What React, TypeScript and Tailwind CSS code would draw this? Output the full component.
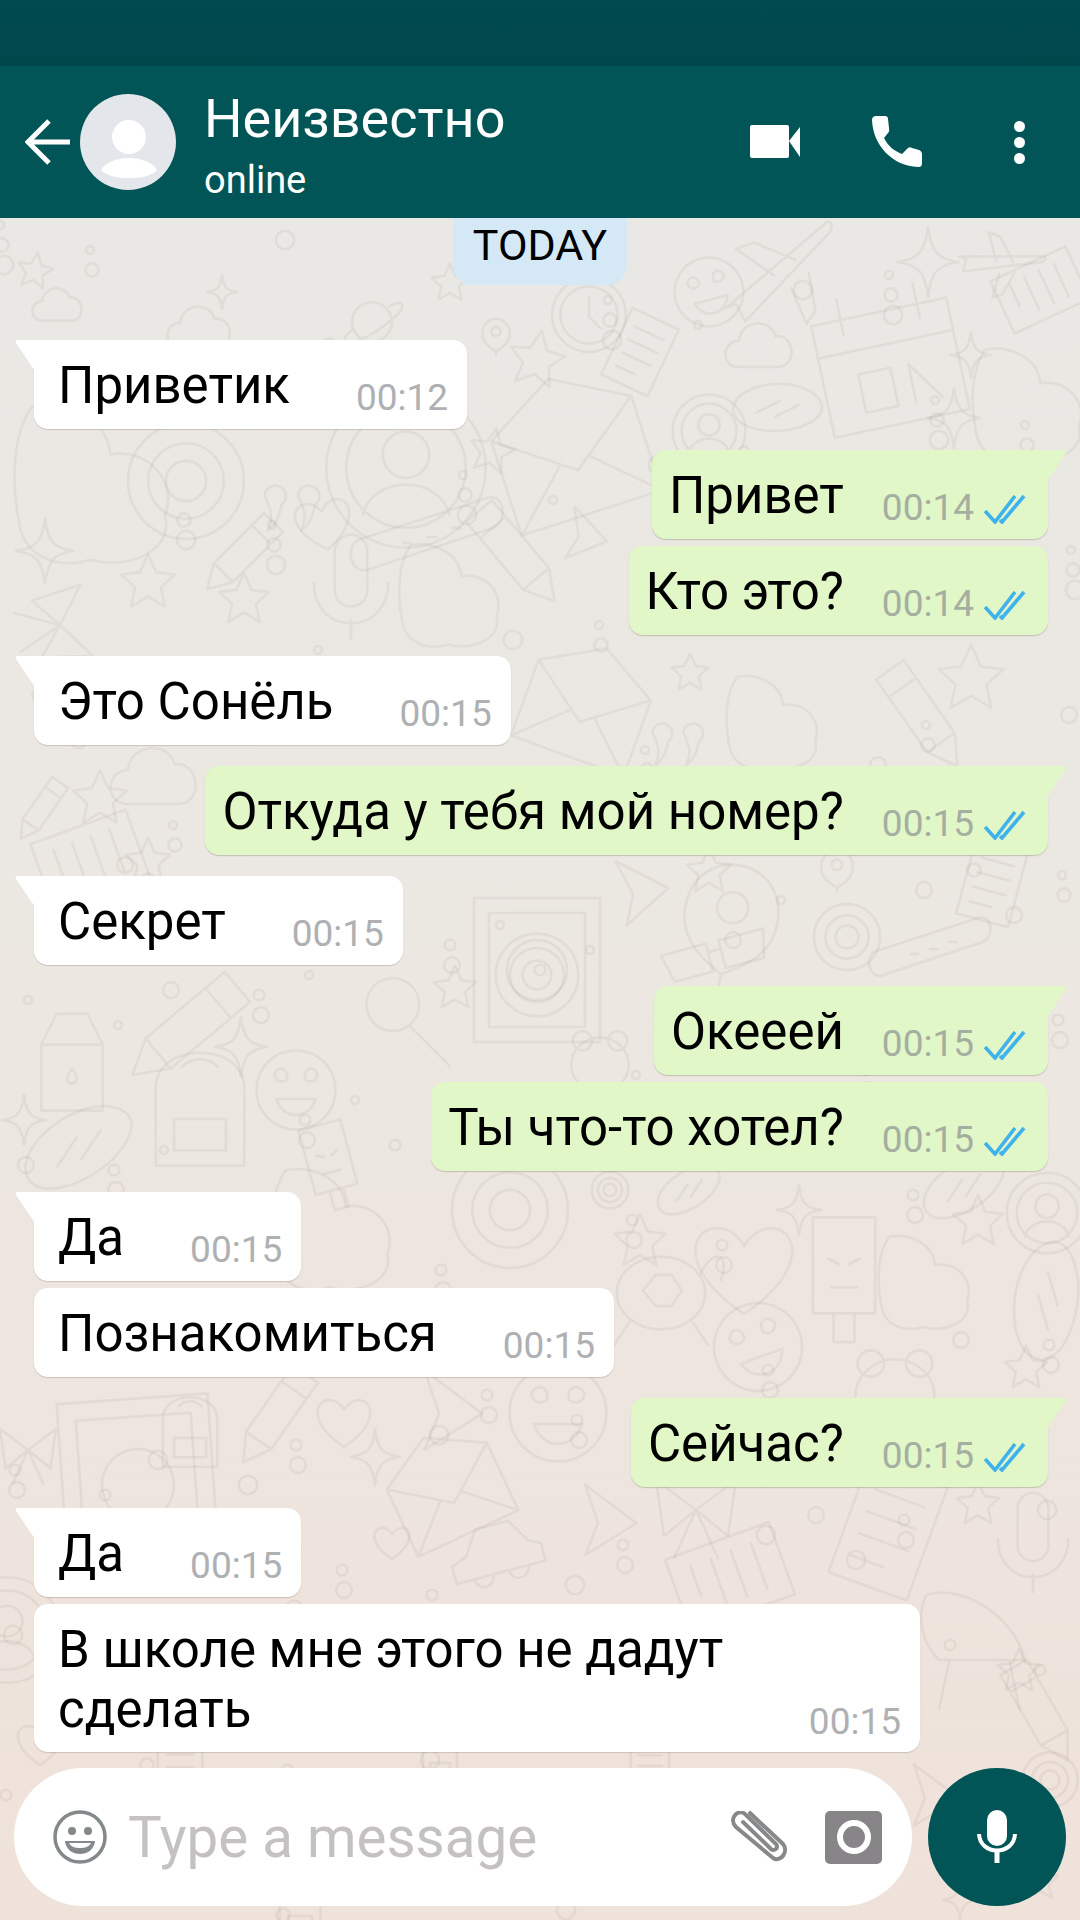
import type { ReactNode } from 'react';

// wallpaper doodles, each drawn in a box around 0,0 (about -50..50)
const star = 'M0-46 14-15 46-11 22 11 29 44 0 27-29 44-22 11-46-11-14-15Z';
const shapes: Record<string, string> = {
  star,
  sparkle: 'M0-50C4-14 14-4 44 0 14 4 4 14 0 50-4 14-14 4-44 0-14-4-4-14 0-50Z',
  heart: 'M0 40C-60 0-50-40-22-38-8-37 0-22 0-22 0-22 10-38 24-38 50-38 58 2 0 40Z',
  cloud: 'M-30 30C-56 30-56-6-30-8-28-36 14-42 22-14 50-18 54 30 26 30Z',
  ring: 'M-48 0A48 48 0 1 0 48 0A48 48 0 1 0-48 0ZM-36 0A36 36 0 1 0 36 0A36 36 0 1 0-36 0ZM-14-8A14 14 0 1 0 14-8A14 14 0 1 0-14-8ZM-26 28C-20 4 20 4 26 28',
  pencil: 'M-14-48 14-48 14 26 0 50-14 26ZM-14-30 14-30M-14 26 14 26',
  mic: 'M-14-26A14 14 0 0 1 14-26V8A14 14 0 0 1-14 8ZM-32 2C-32 48 32 48 32 2M0 34V50',
  envelope: 'M-46-22 0-48 46-22V40H-46ZM-46-22 0 12 46-22M-46 40-10 6M46 40 10 6',
  clock: 'M-44 0A44 44 0 1 0 44 0A44 44 0 1 0-44 0ZM-34 0A34 34 0 1 0 34 0A34 34 0 1 0-34 0ZM0-22V2L14 16',
  calendar: 'M-46-30H46V46H-46ZM-46-8H46M-26-44V-20M26-44V-20M-22 34V8H0V34ZM12 34V8L30 34',
  smile: 'M-44 0A44 44 0 1 0 44 0A44 44 0 1 0-44 0ZM-22 10C-14 34 14 34 22 10ZM-24-18C-18-28-8-24-10-12-18-6-24-12-24-18ZM24-18C18-28 8-24 10-12 18-6 24-12 24-18Z',
  plane: 'M-48 34 44-44C50-48 50-38 46-34L-30 46-38 30ZM-4 4-38-20-22-26 16-10M12 16 26 48 34 36 28 2',
  doc: 'M-32-46H32V46H-32ZM-20-26H20M-20-8H20M-20 10H20M-20 28H6',
  balloon: 'M-36-6C-36-58 36-58 36-6 36 22 10 34 0 40-10 34-36 22-36-6ZM-12-12A12 12 0 1 0 12-12A12 12 0 1 0-12-12ZM0 40V50',
  donut: 'M-46 0A46 46 0 1 0 46 0A46 46 0 1 0-46 0ZM-16 0A16 16 0 1 0 16 0A16 16 0 1 0-16 0ZM-30 0A30 30 0 1 0 30 0A30 30 0 1 0-30 0Z',
  glasses: 'M-48-14H-6V12H-42ZM6-14H48L42 12H6ZM-6-6H6',
  planet: 'M-30 0A30 30 0 1 0 30 0A30 30 0 1 0-30 0ZM-28 10C-50 28-44 36-20 28 0 20 30 0 44-18 50-30 40-32 26-24',
  blob: 'M-34-46C-14-50 10-40 12-18 34-22 52-2 44 18 50 40 20 50 0 44-20 50-40 42-42 20-46 0-46-30-34-46Z',
  turtle: 'M-34 0A34 28 0 1 0 34 0A34 28 0 1 0-34 0ZM-14-2-4-14H8L16-2 8 10H-4ZM30-14C40-36 54-30 46-10M-24 22-36 40M24 22 36 40',
  bear: 'M-36 6A36 34 0 1 0 36 6A36 34 0 1 0-36 6ZM-34-24A12 12 0 1 0-10-24A12 12 0 1 0-34-24ZM10-24A12 12 0 1 0 34-24A12 12 0 1 0 10-24Z',
  popsicle: 'M-24-46H24V28H-24ZM-8 28V50H8V28ZM-12-14-4-10M12-14 4-10M-10 8H10',
  bag: 'M-34-14C-34-50 34-50 34-14V46H-34ZM-20 10H20V34H-20ZM-14-30C-6-38 6-38 14-30',
  car: 'M-46 20V2L-30-4-14-28H20L34-4 46 2V20ZM-28 20A10 10 0 1 0-8 20M8 20A10 10 0 1 0 28 20',
  chair: 'M-40-40C-10-50 30-20 36 10H-30C-46-6-46-26-40-40ZM-22 10-30 48M24 10 32 48',
  tablet: 'M-42-48H42V48H-42ZM-32-38H32V38H-32ZM-20 0A20 20 0 1 0 20 0A20 20 0 1 0-20 0Z',
  triangle: 'M-26-44 38 4-26 44-10 4Z',
  belt: 'M-46 8 40-20C52-24 54-4 44 0L-40 28C-52 30-54 12-46 8ZM-16 10H-10M0 6H6M16 0H22',
  quotes: 'M-32-20A14 14 0 1 1-10-8C-12 8-20 20-28 26-20 10-24-4-32-20ZM12-20A14 14 0 1 1 34-8C32 8 24 20 16 26 24 10 20-4 12-20Z',
  bread: 'M-44 22C-50 0-10-36 24-34 54-30 44-8 32 6 12 30-38 48-44 22ZM-18 16-2-8M2 10 18-14',
  bow: 'M0 0-40-30-32 26ZM0 0 40-30 32 26ZM0 0-22 48M0 0 22 48',
  milk: 'M-28-14-14-42H14L28-14V46H-28ZM-28-14H28M0 8C-14 26 14 26 0 8Z',
  mag: 'M-36-14A24 24 0 1 0 12-14A24 24 0 1 0-36-14ZM4 6 40 42',
};

// [shape, x, y, size, rotation]
const doodles: [string, number, number, number, number][] = [
  ['star', 35, 270, 38, 10], ['sparkle', 222, 292, 34, 0], ['cloud', 58, 305, 52, 0], ['cloud', 200, 328, 66, 0], ['planet', 372, 322, 66, 0],
  ['clock', 589, 315, 84, 0], ['smile', 709, 292, 78, -15], ['plane', 778, 271, 110, 0], ['calendar', 888, 356, 150, -12], ['balloon', 496, 336, 38, 0],
  ['doc', 640, 352, 80, 25], ['star', 537, 358, 60, 10], ['envelope', 572, 452, 160, -18], ['ring', 406, 468, 166, 0], ['star', 492, 450, 48, 12],
  ['blob', 1026, 405, 120, 0], ['sparkle', 954, 418, 60, 0], ['sparkle', 971, 355, 46, 0], ['ring', 709, 431, 76, 0], ['doc', 1040, 290, 90, 65],
  ['plane', 1000, 260, 70, 40], ['cloud', 760, 346, 70, 0], ['bread', 778, 408, 90, 30], ['star', 450, 282, 40, 0], ['sparkle', 928, 262, 70, 0],
  ['blob', 90, 485, 170, 0], ['donut', 186, 481, 126, 0], ['quotes', 289, 511, 76, 0], ['heart', 324, 525, 62, -10], ['belt', 427, 528, 150, 0],
  ['pencil', 241, 555, 96, 45], ['mic', 351, 581, 116, 0], ['star', 148, 581, 58, 0], ['star', 244, 598, 54, 0], ['sparkle', 45, 551, 66, 0],
  ['pencil', 516, 555, 120, -40], ['triangle', 585, 535, 60, 10], ['blob', 448, 596, 110, 0], ['bow', 60, 625, 90, 80],
  ['envelope', 585, 707, 130, 20], ['star', 690, 672, 40, 0], ['blob', 771, 723, 100, 0], ['pencil', 923, 717, 120, -35], ['star', 971, 677, 70, 0],
  ['quotes', 675, 747, 70, 0], ['cloud', 155, 777, 90, 0], ['star', 100, 797, 58, 0], ['pencil', 41, 810, 70, 35], ['doc', 90, 860, 110, 70],
  ['star', 148, 860, 48, 0], ['planet', 490, 815, 80, 0], ['triangle', 640, 890, 74, -10], ['star', 709, 870, 48, 0], ['balloon', 837, 870, 44, 0], ['doc', 992, 883, 84, 15],
  ['balloon', 730, 923, 130, 10], ['tablet', 537, 970, 150, 0], ['donut', 537, 975, 90, 0], ['glasses', 716, 957, 110, -15], ['donut', 847, 937, 72, 0], ['belt', 930, 942, 120, 0],
  ['mag', 406, 1020, 110, 0], ['star', 455, 987, 46, 0], ['sparkle', 241, 1047, 60, 0], ['pencil', 186, 1030, 140, 50], ['milk', 72, 1060, 110, 0], ['sparkle', 24, 1120, 50, 0],
  ['bag', 200, 1106, 130, 0], ['bread', 79, 1147, 120, 0], ['smile', 296, 1090, 90, 0], ['popsicle', 330, 1165, 90, -15], ['bear', 600, 1060, 80, 0],
  ['donut', 510, 1210, 126, 0], ['donut', 610, 1190, 40, 0], ['star', 640, 1240, 56, 0], ['bread', 689, 1190, 70, 0], ['bread', 964, 1187, 90, 0], ['sparkle', 799, 1210, 50, 0],
  ['turtle', 661, 1293, 130, 0], ['heart', 744, 1270, 110, 0], ['popsicle', 844, 1277, 130, 0], ['star', 978, 1220, 54, 0], ['ring', 1047, 1213, 84, 0], ['smile', 758, 1347, 100, -20],
  ['blob', 923, 1283, 100, 0], ['bread', 1047, 1300, 120, -50], ['bear', 895, 1390, 110, 0], ['star', 1026, 1367, 46, 0], ['blob', 330, 1230, 130, 0], ['bag', 190, 1430, 80, 0],
  ['pencil', 275, 1417, 110, 35], ['smile', 558, 1413, 110, 0], ['triangle', 448, 1410, 90, 0], ['heart', 344, 1423, 60, 0], ['tablet', 138, 1485, 180, -4], ['bow', 28, 1450, 70, 0],
  ['sparkle', 375, 1457, 56, 0], ['envelope', 448, 1490, 120, -25], ['triangle', 606, 1520, 80, 0], ['bow', 696, 1510, 100, 0], ['star', 978, 1503, 46, 0], ['doc', 888, 1530, 130, 20],
  ['mic', 1033, 1537, 110, 0], ['car', 496, 1553, 100, -15], ['heart', 392, 1543, 40, 0], ['doc', 730, 1577, 120, 70], ['chair', 978, 1647, 130, 0], ['star', 1019, 1670, 46, 0],
  ['pencil', 1040, 1713, 110, -30], ['ring', 7, 1630, 110, 0], ['heart', 40, 1745, 50, 0], ['triangle', 932, 1795, 70, 0], ['donut', 1050, 1780, 60, 0], ['doc', 180, 1760, 70, 0],
  ['bag', 440, 1758, 50, 0], ['doc', 650, 1760, 60, 0], ['bag', 300, 1910, 60, 0], ['sparkle', 960, 1900, 40, 0], ['star', 1040, 1880, 40, 0],
];

// small bubbles scattered between the doodles
const dots = Array.from({ length: 190 }, (_, i) => ({
  x: (i * 397 + (i % 7) * 53) % 1080,
  y: 225 + ((i * 683 + (i % 5) * 37) % 1695),
  r: 4 + (i % 5) * 1.3,
}));

function Wallpaper() {
  return (
    <svg className="absolute inset-0" width="1080" height="1920" fill="none" stroke="#8a7f72" strokeOpacity="0.1" strokeWidth="2.6" strokeLinejoin="round" strokeLinecap="round">
      {dots.map((d, i) => <circle key={i} cx={d.x} cy={d.y} r={d.r} />)}
      {doodles.map(([name, x, y, size, rot], i) => (
        <path key={i} d={shapes[name]} vectorEffect="non-scaling-stroke" transform={`translate(${x} ${y}) rotate(${rot}) scale(${size / 100})`} />
      ))}
    </svg>
  );
}

function Ticks() {
  return (
    <svg width="42" height="30" viewBox="0 0 42 30" fill="none" stroke="#3fb2ee" strokeWidth="3.6" className="shrink-0">
      <path d="M1 17 11 28 31 2" />
      <path d="M16 26 18 28 40 2" />
    </svg>
  );
}

function Tail({ side }: { side: 'in' | 'out' }) {
  if (side === 'in') {
    return (
      <svg width="20" height="32" viewBox="0 0 20 32" className="absolute -left-[19px] top-0 fill-white">
        <path d="M2 0H20V31L1 3Q0 0 2 0Z" />
      </svg>
    );
  }
  return (
    <svg width="20" height="32" viewBox="0 0 20 32" className="absolute -right-[19px] top-0 fill-[#e1f7c7]">
      <path d="M18 0H0V31L19 3Q20 0 18 0Z" />
    </svg>
  );
}

function Bubble({ side, text, time, tail, className }: { side: 'in' | 'out'; text: string; time: string; tail?: boolean; className: string }) {
  if (side === 'in') {
    return (
      <div className={`relative self-start ml-[34px] h-[89px] flex pl-[24px] pr-[19px] bg-white rounded-[14px] shadow-[0_1px_1px_rgba(90,70,60,0.22)] ${tail ? 'rounded-tl-none' : ''} ${className}`}>
        {tail && <Tail side="in" />}
        <span className="text-[51px] leading-[56px] pt-[18px] text-black whitespace-nowrap">{text}</span>
        <span className="ml-[66px] mt-[37px] text-[37px] leading-[42px] text-[#aeb0b3]">{time}</span>
      </div>
    );
  }
  return (
    <div className={`relative self-end mr-[32px] h-[89px] flex pl-[17px] pr-[22px] bg-[#e1f7c7] rounded-[14px] shadow-[0_1px_1px_rgba(90,90,60,0.28)] ${tail ? 'rounded-tr-none' : ''} ${className}`}>
      {tail && <Tail side="out" />}
      <span className="text-[51px] leading-[56px] pt-[18px] text-black whitespace-nowrap">{text}</span>
      <span className="ml-[38px] mt-[37px] text-[37px] leading-[42px] text-[#a4aea1]">{time}</span>
      <div className="ml-[10px] mt-[44px]"><Ticks /></div>
    </div>
  );
}

function IconBtn({ children, className }: { children: ReactNode; className: string }) {
  return <div className={`flex items-center justify-center ${className}`}>{children}</div>;
}

export default function App() {
  return (
    <div className="w-[1080px] h-[1920px] overflow-hidden flex flex-col font-[Roboto,sans-serif]">
      <div className="h-[66px] shrink-0 bg-gradient-to-b from-[#004a50] to-[#00474c]" />

      {/* Header */}
      <div className="h-[152px] shrink-0 flex bg-[#015557] text-white relative z-10">
        <svg width="46" height="46" viewBox="0 0 46 46" fill="none" stroke="#fff" strokeWidth="5" className="ml-[25px] mt-[53px]">
          <path d="M45 23H4M24 2 3 23 24 44" />
        </svg>
        <svg width="96" height="96" viewBox="0 0 96 96" className="ml-[9px] mt-[28px]">
          <circle cx="48" cy="48" r="48" fill="#e3e6ea" />
          <circle cx="49" cy="43" r="17" fill="#fff" />
          <path d="M21 76C30 60 68 60 77 76 68 87 30 87 21 76Z" fill="#fff" />
        </svg>
        <div className="ml-[28px] pt-[21px]">
          <div className="text-[54px] leading-[64px] whitespace-nowrap">Неизвестно</div>
          <div className="text-[38px] leading-[44px] mt-[7px]">online</div>
        </div>
        <div className="ml-auto mr-[55px] flex items-center">
          <svg width="50" height="34" viewBox="0 0 50 34" fill="#fff">
            <rect x="0" y="0" width="39" height="33" rx="2" />
            <path d="M39 16 50 2V32Z" />
          </svg>
          <svg width="52" height="52" viewBox="0 0 52 52" fill="#fff" className="ml-[71px]">
            <path d="M1 4C1 1 3 0 5 0H14C16 0 17 1 17 3L18 12C18 14 19 15 17 17L13 22C17 30 23 35 31 38L36 33C38 31 39 31 41 32L48 34C50 35 51 36 51 38V47C51 50 50 51 47 51 22 50 2 30 1 4Z" />
          </svg>
          <div className="ml-[91px] flex flex-col gap-[5px]">
            <div className="w-[11px] h-[11px] rounded-full bg-white" />
            <div className="w-[11px] h-[11px] rounded-full bg-white" />
            <div className="w-[11px] h-[11px] rounded-full bg-white" />
          </div>
        </div>
      </div>

      {/* Chat */}
      <div className="relative flex-1 flex flex-col bg-gradient-to-b from-[#e9e8e4] via-[#ece7e1] to-[#efe2da]">
        <div className="absolute inset-x-0 -top-[218px] h-[1920px]"><Wallpaper /></div>

        <div className="relative self-center w-[174px] h-[67px] pt-[4px] text-center bg-[#d5e8f5] rounded-b-[20px] text-[43px] leading-[46px] text-black">TODAY</div>

        <Bubble side="in" tail text="Приветик" time="00:12" className="relative mt-[55px]" />
        <Bubble side="out" tail text="Привет" time="00:14" className="mt-[21px]" />
        <Bubble side="out" text="Кто это?" time="00:14" className="mt-[7px]" />
        <Bubble side="in" tail text="Это Сонёль" time="00:15" className="mt-[21px]" />
        <Bubble side="out" tail text="Откуда у тебя мой номер?" time="00:15" className="mt-[21px]" />
        <Bubble side="in" tail text="Секрет" time="00:15" className="mt-[21px]" />
        <Bubble side="out" tail text="Окееей" time="00:15" className="mt-[21px]" />
        <Bubble side="out" text="Ты что-то хотел?" time="00:15" className="mt-[7px]" />
        <Bubble side="in" tail text="Да" time="00:15" className="mt-[21px]" />
        <Bubble side="in" text="Познакомиться" time="00:15" className="mt-[7px]" />
        <Bubble side="out" tail text="Сейчас?" time="00:15" className="mt-[21px]" />
        <Bubble side="in" tail text="Да" time="00:15" className="mt-[21px]" />

        <div className="relative self-start ml-[34px] mt-[7px] w-[886px] h-[148px] pl-[24px] pt-[16px] bg-white rounded-[14px] shadow-[0_1px_1px_rgba(90,70,60,0.22)]">
          <div className="text-[51px] leading-[60px] text-black">В школе мне этого не дадут<br />сделать</div>
          <span className="absolute right-[19px] bottom-[9px] text-[37px] leading-[42px] text-[#aeb0b3]">00:15</span>
        </div>

        {/* Input bar */}
        <div className="relative mt-[16px] ml-[14px] flex">
          <div className="w-[898px] h-[138px] pr-[30px] flex items-center bg-white rounded-full">
            <IconBtn className="ml-[39px] w-[54px] h-[54px]">
              <svg width="54" height="54" viewBox="0 0 54 54" fill="none">
                <circle cx="27" cy="27" r="25" stroke="#83888a" strokeWidth="3.5" />
                <circle cx="19" cy="21" r="4" fill="#83888a" />
                <circle cx="35" cy="21" r="4" fill="#83888a" />
                <path d="M12 31H42C41 40 34 44 27 44 20 44 13 40 12 31Z" fill="#83888a" />
                <path d="M16 33H38C36 37 32 38 27 38 22 38 18 37 16 33Z" fill="#fff" />
              </svg>
            </IconBtn>
            <span className="ml-[21px] mt-[3px] text-[56.5px] text-[#c5c1c1]">Type a message</span>
            <IconBtn className="ml-auto w-[58px] h-[52px]">
              <svg width="58" height="52" viewBox="0 0 58 52" fill="none" stroke="#87888a" strokeWidth="4" strokeLinecap="round">
                <path d="M20 2 53 33C59 40 51 52 43 47L6 16C-2 8 8-3 15 3L46 33C49 37 44 41 41 38L13 11" />
              </svg>
            </IconBtn>
            <div className="ml-[37px] w-[57px] h-[53px] flex items-center justify-center rounded-[5px] bg-[#878588]">
              <div className="w-[34px] h-[34px] rounded-full border-[6px] border-white" />
            </div>
          </div>
          <div className="ml-[16px] w-[138px] h-[138px] flex items-center justify-center rounded-full bg-[#015557]">
            <svg width="40" height="54" viewBox="0 0 40 54" fill="none">
              <rect x="10" y="0" width="20" height="36" rx="10" fill="#fff" />
              <path d="M2 24C3 46 37 46 38 24" stroke="#fff" strokeWidth="4" />
              <path d="M20 40V53" stroke="#fff" strokeWidth="5" />
            </svg>
          </div>
        </div>
      </div>
    </div>
  );
}
